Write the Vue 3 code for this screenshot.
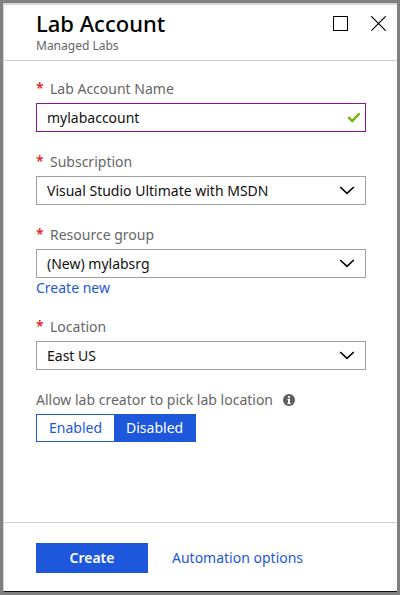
<script setup>
import { ref } from 'vue'

const name = ref('mylabaccount')
const pickLocation = ref('Disabled')
const choices = ['Enabled', 'Disabled']
const selects = [
  { id: 'subscription', label: 'Subscription', value: 'Visual Studio Ultimate with MSDN' },
  { id: 'resource-group', label: 'Resource group', value: '(New) mylabsrg', link: 'Create new' },
  { id: 'location', label: 'Location', value: 'East US' },
]
</script>

<template>
  <main class="frame">
    <section class="blade">
      <header class="head">
        <div class="titles">
          <h1>Lab Account</h1>
          <p>Managed Labs</p>
        </div>
        <div class="window-actions">
          <button type="button" aria-label="Maximize">
            <svg width="15" height="15" viewBox="0 0 15 15"><rect x=".5" y=".5" width="14" height="14" fill="none" stroke="#000" /></svg>
          </button>
          <button type="button" aria-label="Close">
            <svg width="15" height="15" viewBox="0 0 15 15"><path d="M.3 .3L14.7 14.7M14.7 .3L.3 14.7" fill="none" stroke="#000" stroke-width="1.2" /></svg>
          </button>
        </div>
      </header>

      <form id="lab-form" class="body" @submit.prevent>
        <div class="field">
          <label for="account-name"><span class="star">*</span>Lab Account Name</label>
          <div class="control valid">
            <input id="account-name" v-model="name" type="text" required />
            <svg class="check" width="14" height="11" viewBox="0 0 14 11"><path d="M1.2 5.2L5.2 9L12.6 1.2" fill="none" stroke="#6bb700" stroke-width="2.3" /></svg>
          </div>
        </div>

        <div v-for="s in selects" :key="s.id" class="field">
          <label :for="s.id"><span class="star">*</span>{{ s.label }}</label>
          <div class="control">
            <select :id="s.id" required>
              <option>{{ s.value }}</option>
            </select>
            <svg class="chevron" width="16" height="9" viewBox="0 0 16 9"><path d="M1.2 1L8 7.4L14.8 1" fill="none" stroke="#000" stroke-width="1.6" /></svg>
          </div>
          <a v-if="s.link" href="#">{{ s.link }}</a>
        </div>

        <fieldset class="field">
          <legend>
            Allow lab creator to pick lab location
            <svg width="12" height="12" viewBox="0 0 12 12"><circle cx="6" cy="6" r="6" fill="#5f5f5f" /><path d="M5 2h2v1.7H5zM4.3 4.8H7V9h.8v1H4.3V9H5V5.8h-.7z" fill="#fff" /></svg>
          </legend>
          <div class="toggle">
            <label v-for="c in choices" :key="c" :class="{ on: pickLocation === c }">
              <input v-model="pickLocation" type="radio" name="pick-location" :value="c" />{{ c }}
            </label>
          </div>
        </fieldset>
      </form>

      <footer class="foot">
        <button class="create" type="submit" form="lab-form">Create</button>
        <a href="#">Automation options</a>
      </footer>
    </section>
  </main>
</template>

<style>
body {
  margin: 0;
}
</style>

<style scoped>
* {
  box-sizing: border-box;
}
.frame {
  display: flex;
  min-height: 100vh;
  padding: 3px;
  background: #808080;
  color: #111;
  font: 14px/20px "Segoe UI", "Noto Sans", "Open Sans", sans-serif;
}
.blade {
  flex: 1;
  min-width: 0;
  display: flex;
  flex-direction: column;
  background: #fff;
  border-top: 2px double #d6d6d6;
  border-left: 1px solid #d0d0d0;
  border-bottom: 1px solid #111;
  margin-bottom: 0;
}
.head {
  display: flex;
  justify-content: space-between;
  padding: 3px 5px 6px 32px;
  border-bottom: 1px solid #d0d0d0;
}
h1 {
  margin: 0;
  color: #000;
  font-size: 22px;
  font-weight: 500;
  line-height: 30px;
}
p {
  margin: 0;
  color: #666;
  font-size: 12px;
  line-height: 16px;
}
.window-actions {
  display: flex;
  align-items: flex-start;
  gap: 11px;
  padding-top: 2px;
}
button {
  border: 0;
  font: inherit;
  cursor: pointer;
}
.window-actions button {
  display: flex;
  padding: 6px;
  background: none;
}
.body {
  flex: 1;
  display: flex;
  flex-direction: column;
  gap: 20px;
  padding: 18px 31px 20px 32px;
}
.field {
  display: flex;
  flex-direction: column;
  align-items: stretch;
  min-width: 0;
  margin: 0;
  padding: 0;
  border: 0;
}
.field > label,
legend {
  display: flex;
  align-items: center;
  margin-bottom: 4px;
  padding: 0;
  color: #666;
}
.field > label {
  align-items: flex-start;
}
legend {
  gap: 10px;
}
.star {
  width: 14px;
  color: #e81010;
  font-weight: 500;
  line-height: 18px;
}
.control {
  display: flex;
  align-items: center;
  height: 29px;
  padding-right: 10px;
  border: 1px solid #a0a0a0;
}
.control.valid {
  padding-right: 4px;
  border-color: #881798;
}
.control input,
.control select {
  flex: 1;
  min-width: 0;
  height: 27px;
  padding: 0 0 0 10px;
  border: 0;
  outline: 0;
  appearance: none;
  background: none;
  color: #111;
  font: inherit;
}
a {
  color: #1d57db;
  text-decoration: none;
}
.field > a {
  align-self: flex-start;
  line-height: 19px;
}
.toggle {
  display: flex;
  width: fit-content;
  border: 1px solid #1d57db;
}
.toggle label {
  padding: 3px 12px;
  color: #1d57db;
  cursor: pointer;
}
.toggle .on {
  background: #1d57db;
  color: #fff;
}
.toggle input {
  appearance: none;
  width: 0;
  height: 0;
  margin: 0;
  display: block;
}
.foot {
  display: flex;
  align-items: center;
  gap: 24px;
  padding: 20px 32px 18px;
  border-top: 1px solid #d0d0d0;
}
.create {
  width: 112px;
  height: 30px;
  padding: 0;
  background: #1d57db;
  color: #fff;
  font-weight: 600;
}
</style>
